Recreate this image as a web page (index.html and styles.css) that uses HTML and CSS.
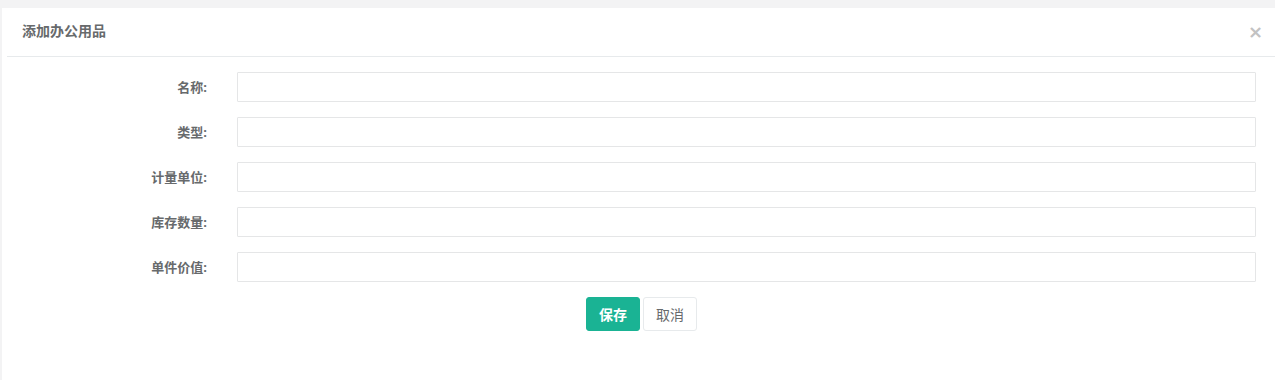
FILE: index.html
```html
<!DOCTYPE html>
<html lang="zh-CN">
<head>
    <meta charset="UTF-8">
    <title>添加办公用品</title>
    <link rel="stylesheet" href="styles.css">
</head>
<body>
    <div class="panel">
        <div class="panel-header">
            <h4>添加办公用品</h4>
            <button class="close" title="关闭">×</button>
        </div>
        <form class="panel-body">
            <div class="form-row">
                <label for="name">名称:</label>
                <input type="text" id="name">
            </div>
            <div class="form-row">
                <label for="type">类型:</label>
                <input type="text" id="type">
            </div>
            <div class="form-row">
                <label for="unit">计量单位:</label>
                <input type="text" id="unit">
            </div>
            <div class="form-row">
                <label for="stock">库存数量:</label>
                <input type="text" id="stock">
            </div>
            <div class="form-row">
                <label for="price">单件价值:</label>
                <input type="text" id="price">
            </div>
            <div class="actions">
                <button type="button" class="btn btn-primary">保存</button>
                <button type="button" class="btn btn-white">取消</button>
            </div>
        </form>
    </div>
</body>
</html>
```

FILE: styles.css
```css
body {
    font-family: "Open Sans", "Noto Sans CJK SC", sans-serif;
    margin: 0;
    background-color: #f3f3f4;
    color: #676a6c;
    font-size: 13px;
}
.panel {
    background-color: #fff;
    margin: 8px 0 0 2px;
    height: 372px;
}
.panel-header {
    display: flex;
    justify-content: space-between;
    align-items: center;
    height: 49px;
    margin-left: 5px;
    padding: 0 12px 0 15px;
    border-bottom: 1px solid #e7eaec;
    box-sizing: border-box;
}
.panel-header h4 {
    margin: 0 0 4px;
    font-size: 14px;
    font-weight: 700;
}
.close {
    background: none;
    border: none;
    padding: 0;
    font-family: "DejaVu Sans", sans-serif;
    font-size: 18px;
    font-weight: 700;
    color: #c2c2c2;
    cursor: pointer;
    line-height: 1;
}
.panel-body {
    padding: 15px 19px 0 0;
    display: flex;
    flex-direction: column;
    gap: 15px;
}
.form-row {
    display: grid;
    grid-template-columns: 205px 1fr;
    gap: 30px;
    align-items: center;
}
.form-row label {
    text-align: right;
    font-weight: 700;
    font-size: 13px;
    margin-bottom: 2px;
}
.form-row input {
    height: 30px;
    box-sizing: border-box;
    border: 1px solid #e5e6e7;
    border-radius: 1px;
    padding: 6px 12px;
    font: inherit;
}
.actions {
    display: flex;
    justify-content: center;
    gap: 3px;
    padding-left: 25px;
}
.btn {
    width: 54px;
    height: 34px;
    border-radius: 3px;
    font-family: inherit;
    font-size: 14px;
    cursor: pointer;
}
.btn-primary {
    background-color: #1ab394;
    border: 1px solid #1ab394;
    color: #fff;
    font-weight: 700;
}
.btn-white {
    background-color: #fff;
    border: 1px solid #e7eaec;
    color: #676a6c;
}
```
